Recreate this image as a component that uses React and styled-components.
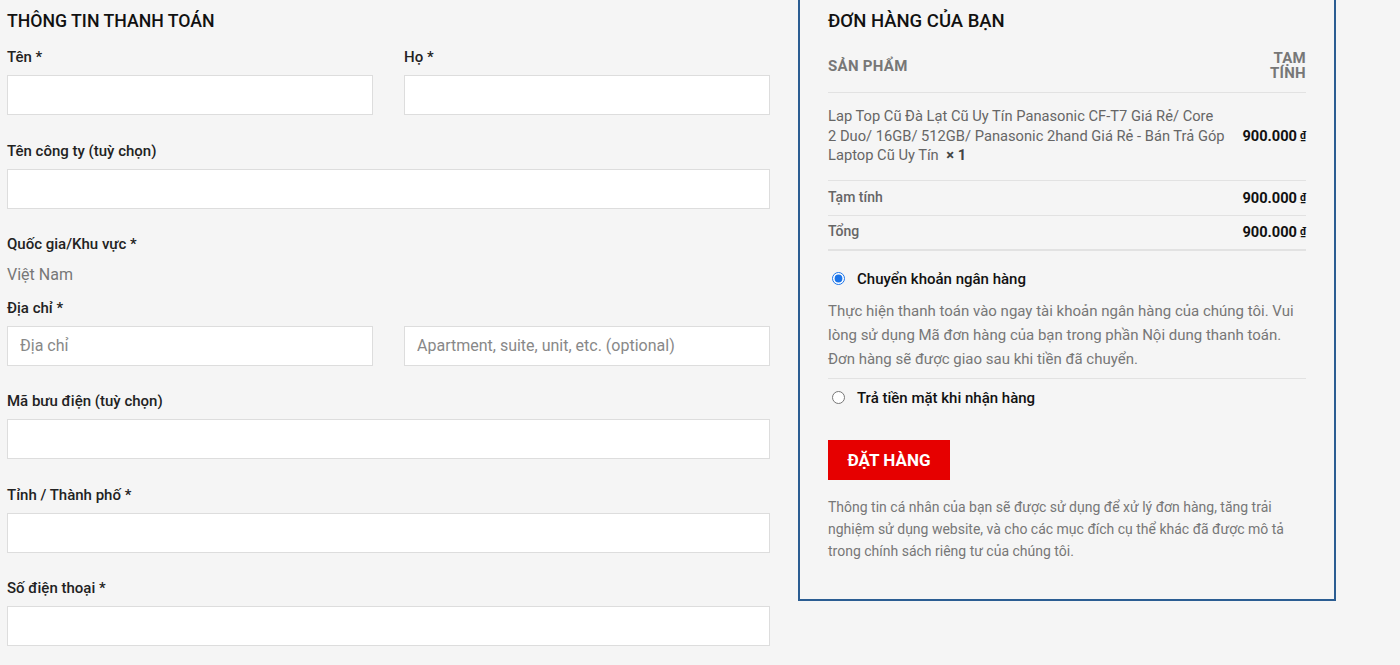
import React from "react";
import styled, { createGlobalStyle } from "styled-components";

// =========================================================
const GlobalStyle = createGlobalStyle`
  html, body {
    margin: 0;
    padding: 0;
    background: #f5f5f5;
    font-family: Roboto, "Liberation Sans", Arial, sans-serif;
    color: #222;
  }
`;

const Page = styled.div`
  display: flex;
  align-items: flex-start;
  gap: 28px;
  padding: 0 64px 0 7px;
  height: 665px;
  overflow: hidden;
`;

const Billing = styled.section`
  width: 763px;
  flex: none;
`;

const Heading = styled.h3`
  margin: 0;
  height: 42px;
  line-height: 42px;
  font-size: ${(p) => p.$size || 18}px;
  font-weight: 500;
  color: #111;
  text-transform: uppercase;
`;

const Row = styled.div`
  display: grid;
  grid-template-columns: 1fr 1fr;
  column-gap: 31px;
`;

const Field = styled.div`
  margin-top: ${(p) => p.$top || 0}px;
  margin-bottom: 24.5px;
`;

const Label = styled.label`
  display: block;
  height: 20px;
  padding-top: 1px;
  line-height: 20px;
  font-size: 15px;
  font-weight: 500;
  color: #222;
  margin-bottom: 8px;
`;

const Input = styled.input`
  display: block;
  box-sizing: border-box;
  width: 100%;
  height: 40px;
  border: 1px solid #ddd;
  background: #fff;
  padding: 0 12px;
  font-family: inherit;
  font-size: 16px;
  color: #333;
  outline: none;

  &::placeholder {
    color: #888;
  }
`;

const Country = styled.div`
  font-size: 16px;
  color: #777;
  padding-top: 2px;
  line-height: 22px;
`;

// =========================================================
const Order = styled.aside`
  width: 538px;
  flex: none;
  box-sizing: border-box;
  border: 2px solid #2b5d92;
  border-top: 0;
  padding: 0 28px 37px;
`;

const Table = styled.div`
  display: flex;
  flex-direction: column;
`;

const Line = styled.div`
  display: flex;
  justify-content: space-between;
  align-items: center;
  gap: 12px;
  padding: ${(p) => p.$pad || "8px 0"};
  border-bottom: ${(p) => (p.$thick ? 2 : 1)}px solid #e2e2e2;
`;

const HeadCell = styled.div`
  font-size: 15px;
  font-weight: 700;
  color: #777;
  letter-spacing: 0.3px;
  line-height: 15px;
  text-align: ${(p) => (p.$right ? "right" : "left")};
`;

const ProductName = styled.div`
  flex: 1;
  font-size: 14.7px;
  line-height: 19.5px;
  color: #666;
`;

const Qty = styled.strong`
  color: #444;
  font-weight: 700;
  margin-left: 4px;
`;

const Key = styled.div`
  font-size: 14px;
  line-height: 17px;
  font-weight: 500;
  color: #666;
`;

const Price = styled.div`
  font-size: 14.6px;
  line-height: 17px;
  font-weight: 700;
  color: #111;
  white-space: nowrap;
`;

const Currency = styled.span`
  font-size: 10.5px;
  vertical-align: 2px;
  margin-left: 3px;
  text-decoration: underline;
`;

const Payments = styled.div`
  padding-top: 18px;
`;

const Method = styled.label`
  display: flex;
  align-items: center;
  gap: 12px;
  padding-left: 4px;
  font-size: 15px;
  font-weight: 500;
  color: #111;
  height: 20px;
`;

const Radio = styled.input`
  margin: 0;
  width: 13px;
  height: 13px;
  accent-color: #1a73e8;
`;

const MethodNote = styled.p`
  margin: 10px 0 9px;
  padding: 0 6px 7px 0;
  font-size: 15px;
  line-height: 24px;
  color: #777;
  border-bottom: 1px solid #e2e2e2;
`;

const Submit = styled.button`
  display: block;
  margin-top: 32px;
  width: 122px;
  height: 40px;
  border: 0;
  background: #e60000;
  color: #fff;
  font-family: inherit;
  font-size: 17px;
  font-weight: 700;
  text-transform: uppercase;
  cursor: pointer;
`;

const Privacy = styled.p`
  margin: 16px 0 0;
  font-size: 14px;
  line-height: 22px;
  color: #777;
`;

function Money() {
  return (
    <Price>
      900.000<Currency>₫</Currency>
    </Price>
  );
}

function App() {
  return (
    <>
      <GlobalStyle />
      <Page>
        <Billing>
          <Heading $size={17.7}>Thông tin thanh toán</Heading>
          <Row>
            <Field $top={4}>
              <Label>Tên *</Label>
              <Input />
            </Field>
            <Field $top={4}>
              <Label>Họ *</Label>
              <Input />
            </Field>
          </Row>
          <Field>
            <Label>Tên công ty (tuỳ chọn)</Label>
            <Input />
          </Field>
          <Field>
            <Label>Quốc gia/Khu vực *</Label>
            <Country>Việt Nam</Country>
          </Field>
          <Row>
            <Field $top={-14}>
              <Label>Địa chỉ *</Label>
              <Input placeholder="Địa chỉ" />
            </Field>
            <Field $top={-14}>
              <Label>&nbsp;</Label>
              <Input placeholder="Apartment, suite, unit, etc. (optional)" />
            </Field>
          </Row>
          <Field>
            <Label>Mã bưu điện (tuỳ chọn)</Label>
            <Input />
          </Field>
          <Field>
            <Label>Tỉnh / Thành phố *</Label>
            <Input />
          </Field>
          <Field>
            <Label>Số điện thoại *</Label>
            <Input />
          </Field>
        </Billing>

        <Order>
          <Heading $size={18.5}>Đơn hàng của bạn</Heading>
          <Table>
            <Line $pad="9px 0 11px">
              <HeadCell>SẢN PHẨM</HeadCell>
              <HeadCell $right>
                TẠM
                <br />
                TÍNH
              </HeadCell>
            </Line>
            <Line $pad="14px 0 14px">
              <ProductName>
                Lap Top Cũ Đà Lạt Cũ Uy Tín Panasonic CF-T7 Giá Rẻ/ Core 2{"\u00a0"}Duo/ 16GB/
                512GB/ Panasonic 2hand Giá Rẻ - Bán Trả Góp Laptop Cũ Uy Tín <Qty>× 1</Qty>
              </ProductName>
              <Money />
            </Line>
            <Line $pad="8px 0">
              <Key>Tạm tính</Key>
              <Money />
            </Line>
            <Line $pad="7px 0 8px" $thick>
              <Key>Tổng</Key>
              <Money />
            </Line>
          </Table>

          <Payments>
            <Method>
              <Radio type="radio" name="pay" defaultChecked />
              Chuyển khoản ngân hàng
            </Method>
            <MethodNote>
              Thực hiện thanh toán vào ngay tài khoản ngân hàng của chúng tôi. Vui lòng sử dụng
              Mã đơn hàng của bạn trong phần Nội dung thanh toán. Đơn hàng sẽ được giao sau khi
              tiền đã chuyển.
            </MethodNote>
            <Method>
              <Radio type="radio" name="pay" />
              Trả tiền mặt khi nhận hàng
            </Method>
          </Payments>

          <Submit>Đặt hàng</Submit>
          <Privacy>
            Thông tin cá nhân của bạn sẽ được sử dụng để xử lý đơn hàng, tăng trải nghiệm sử
            dụng website, và cho các mục đích cụ thể khác đã được mô tả trong chính sách riêng
            tư của chúng tôi.
          </Privacy>
        </Order>
      </Page>
    </>
  );
}

export default App;
